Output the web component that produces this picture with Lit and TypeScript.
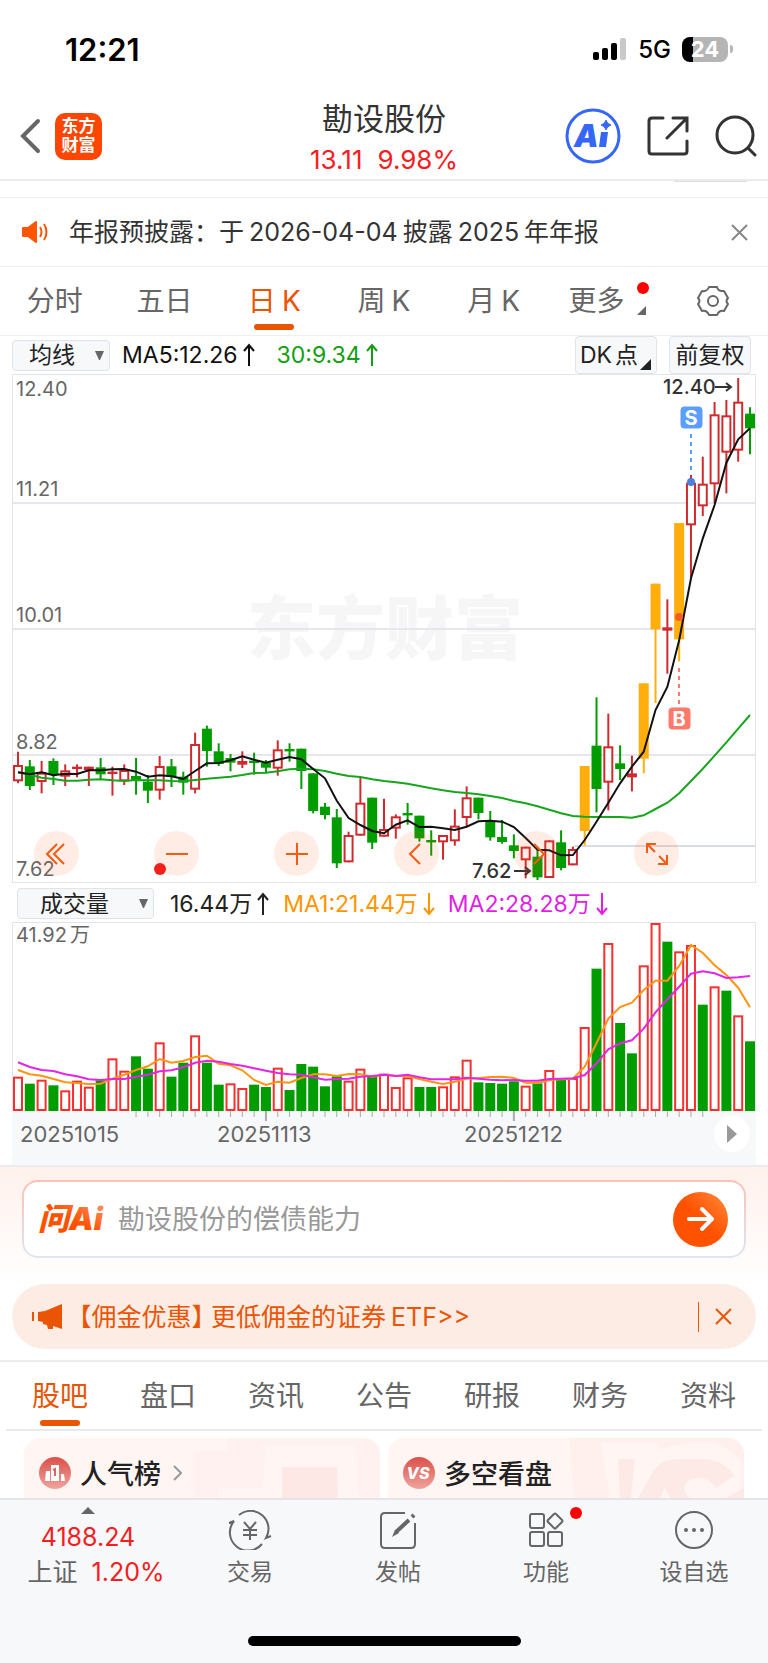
import { LitElement, html, svg, css } from "lit";
import { customElement, state } from "lit/decorators.js";
import { classMap } from "lit/directives/class-map.js";

type Tone = "r" | "g" | "o";
type Candle = [Tone, number, number, number, number];

/* Candles: tone, high, body top, body bottom, low (thirds of a pixel around the 8.82 band). */
const CANDLES: Candle[] = [
  ["r", 215, 255, 304, 310], ["g", 240, 259, 318, 330], ["r", 243, 278, 306, 340], ["g", 235, 243, 284, 315],
  ["r", 253, 271, 290, 318], ["r", 253, 260, 264, 292], ["r", 260, 260, 270, 318], ["g", 234, 262, 283, 300],
  ["r", 260, 275, 279, 347], ["r", 253, 270, 304, 315], ["g", 234, 288, 302, 344], ["g", 285, 305, 332, 369],
  ["r", 228, 258, 332, 359], ["g", 237, 259, 291, 321], ["g", 275, 290, 308, 344], ["r", 158, 192, 329, 340],
  ["g", 137, 146, 213, 260], ["g", 190, 214, 252, 258], ["g", 222, 234, 248, 274], ["r", 214, 243, 254, 264],
  ["g", 218, 242, 246, 284], ["g", 240, 248, 263, 280], ["r", 181, 208, 266, 287], ["g", 190, 207, 211, 245],
  ["g", 206, 206, 273, 327], ["g", 280, 280, 393, 400], ["g", 369, 380, 405, 418], ["g", 387, 412, 550, 564],
  ["r", 455, 465, 547, 547], ["r", 290, 368, 467, 467], ["g", 353, 353, 488, 507], ["r", 356, 447, 470, 470],
  ["r", 403, 409, 446, 476], ["g", 369, 399, 404, 434], ["g", 407, 407, 475, 485], ["g", 451, 480, 484, 527],
  ["r", 465, 465, 487, 539], ["r", 388, 437, 484, 497], ["r", 319, 352, 414, 440], ["g", 353, 353, 399, 418],
  ["g", 393, 423, 472, 482], ["g", 420, 471, 486, 491], ["g", 463, 496, 513, 535], ["r", 500, 500, 541, 595],
  ["g", 500, 530, 592, 600], ["r", 481, 481, 594, 594], ["g", 451, 487, 564, 571], ["r", 500, 507, 556, 556],
  ["o", 258, 258, 453, 496], ["g", 52, 197, 327, 397], ["r", 101, 199, 308, 391], ["g", 196, 250, 267, 300],
  ["r", 227, 280, 292, 334], ["o", 10, 10, 236, 280], ["o", -289, -289, -152, 69], ["r", -242, -158, -148, -19],
  ["o", -471, -471, -122, -56], ["r", -615, -592, -464, -305], ["r", -670, -589, -521, -492],
  ["r", -834, -797, -587, -530], ["r", -840, -794, -682, -560], ["r", -906, -835, -688, -655],
  ["g", -818, -799, -755, -677],
];

const MA5 = [277, 283, 277, 286, 281, 282, 271, 271, 268, 267, 275, 290, 286, 289, 297, 273, 250, 249, 241, 229, 239,
  248, 239, 231, 238, 267, 295, 362, 414, 435, 453, 460, 434, 421, 441, 440, 445, 450, 440, 424, 422, 425, 441, 474,
  509, 511, 526, 525, 480, 425, 368, 310, 260, 215, 90, 20, -120, -305, -425, -525, -652, -722, -755];

const MA30 = [277, 284, 293, 297, 302, 302, 299, 298, 301, 303, 300, 301, 301, 303, 304, 300, 296, 293, 290, 285, 279,
  278, 274, 268, 266, 268, 273, 281, 288, 291, 298, 303, 307, 311, 318, 325, 331, 336, 339, 343, 348, 354, 363, 370,
  379, 389, 400, 408, 410, 411, 411, 411, 413, 406, 387, 368, 340, 303, 266, 227, 187, 146, 105];

/* Volume bar tops, measured down from the top of the pane. */
const VOLUME: [Tone, number][] = [
  ["r", 590], ["g", 611], ["r", 599], ["g", 616], ["r", 631], ["r", 602], ["r", 620], ["g", 601], ["r", 535],
  ["r", 572], ["g", 529], ["g", 566], ["r", 487], ["g", 590], ["g", 548], ["r", 466], ["g", 548], ["g", 614],
  ["r", 610], ["r", 624], ["g", 614], ["g", 621], ["r", 563], ["g", 630], ["g", 552], ["g", 560], ["g", 619],
  ["g", 589], ["r", 602], ["r", 566], ["g", 590], ["r", 581], ["r", 621], ["r", 592], ["g", 621], ["g", 621],
  ["r", 619], ["r", 589], ["r", 539], ["g", 607], ["g", 609], ["g", 611], ["g", 604], ["r", 617], ["g", 610],
  ["r", 570], ["g", 600], ["r", 594], ["r", 441], ["g", 266], ["r", 189], ["g", 429], ["g", 520], ["r", 256],
  ["r", 129], ["g", 185], ["r", 214], ["r", 195], ["g", 374], ["r", 319], ["g", 332], ["r", 406], ["g", 484],
];

const VMA1 = [570, 583, 587, 597, 607, 609, 612, 611, 596, 584, 570, 559, 537, 548, 543, 531, 527, 551, 556, 571, 600,
  615, 605, 608, 594, 583, 583, 588, 582, 583, 590, 584, 587, 589, 597, 605, 612, 605, 596, 594, 591, 590, 594, 608,
  609, 601, 598, 596, 560, 490, 416, 381, 368, 330, 302, 302, 258, 195, 219, 256, 285, 323, 382];

const VMA2 = [547, 561, 570, 573, 583, 589, 598, 600, 597, 597, 590, 584, 574, 571, 562, 548, 542, 545, 552, 557, 565,
  572, 579, 583, 584, 592, 599, 597, 596, 590, 588, 584, 588, 584, 592, 598, 598, 598, 593, 596, 599, 601, 600, 602,
  602, 597, 596, 595, 585, 550, 508, 490, 481, 446, 397, 358, 320, 281, 274, 280, 294, 292, 288];

const cx = (i: number) => 6 + (i * 732) / 62;
const priceY = (v: number) => 306 + v / 3;
const volY = (v: number) => (v - 126) / 3;
const line = (values: number[], y: (v: number) => number) =>
  values.map((v, i) => `${cx(i).toFixed(1)},${y(v).toFixed(1)}`).join(" ");

const BASE = css`
  * {
    box-sizing: border-box;
  }
  button,
  select,
  input {
    font: inherit;
    color: inherit;
    margin: 0;
    padding: 0;
    border: 0;
    background: none;
    appearance: none;
  }
  button {
    cursor: pointer;
    display: flex;
    align-items: center;
    justify-content: center;
  }
  a {
    color: inherit;
    text-decoration: none;
  }
  svg {
    display: block;
  }
`;

@customElement("price-chart")
export class PriceChart extends LitElement {
  static styles = [
    BASE,
    css`
      :host {
        display: block;
        position: relative;
      }
      .plot {
        width: 100%;
        height: auto;
      }
      .frame {
        fill: none;
        stroke: #e3e4e8;
        stroke-width: 2;
      }
      .grid {
        stroke: #e6e7ee;
        stroke-width: 2;
      }
      .latest {
        stroke: #d9dce6;
        stroke-width: 2;
      }
      .watermark {
        font-size: 69px;
        font-weight: 900;
        fill: #f6f6f7;
        text-anchor: middle;
      }
      .label {
        font-size: 20px;
        fill: #666;
      }
      .peak {
        font-size: 20px;
        fill: #333;
        font-weight: 500;
      }
      .r {
        stroke: #cf2b2f;
        fill: #fff;
        stroke-width: 2;
      }
      .g {
        stroke: #009c00;
        fill: #009c00;
        stroke-width: 2;
      }
      .o {
        stroke: #ffae0c;
        fill: #ffae0c;
        stroke-width: 2;
      }
      .ma5 {
        fill: none;
        stroke: #111;
        stroke-width: 2;
      }
      .ma30 {
        fill: none;
        stroke: #17a51d;
        stroke-width: 2;
      }
      .arrow {
        fill: none;
        stroke: #333;
        stroke-width: 2;
      }
      .mark {
        fill: #fff;
        font-size: 20px;
        font-weight: 700;
        text-anchor: middle;
      }
      .sell {
        fill: #5b9ffb;
        stroke: #5b9ffb;
      }
      .buy {
        fill: #ff7a6b;
        stroke: #ff7a6b;
      }
      .dash {
        stroke-width: 2;
        stroke-dasharray: 4 4;
      }
      .tools {
        position: absolute;
        left: 0;
        right: 0;
        bottom: 7px;
        display: flex;
        gap: 75px;
        padding-left: 22px;
      }
      .tool {
        width: 45px;
        height: 45px;
        border-radius: 50%;
        background: rgba(255, 100, 30, 0.12);
      }
      .tool svg {
        fill: none;
        stroke: #f35b10;
        stroke-width: 2;
      }
      .dot {
        position: absolute;
        left: 142px;
        bottom: 8px;
        width: 12px;
        height: 12px;
        border-radius: 50%;
        background: #f2201d;
      }
    `,
  ];

  private candle([tone, high, top, bottom, low]: Candle, i: number) {
    const x = cx(i);
    const t = priceY(top);
    const b = priceY(bottom);
    return svg`<g class=${tone}>
      <line x1=${x} x2=${x} y1=${priceY(high)} y2=${priceY(low)}></line>
      <rect x=${x - 4} y=${t + 1} width="8" height=${Math.max(b - t - 2, 0.4)}></rect>
    </g>`;
  }

  private tool(label: string, d: string) {
    return html`<button class="tool" aria-label=${label}>
      <svg width="24" height="24" viewBox="0 0 24 24"><path d=${d}></path></svg>
    </button>`;
  }

  render() {
    return html`
      <svg class="plot" viewBox="0 0 744 509" role="img" aria-label="日K">
        <text class="watermark" x="373" y="280">东方财富</text>
        <line class="grid" x1="0" x2="744" y1="129" y2="129"></line>
        <line class="grid" x1="0" x2="744" y1="255" y2="255"></line>
        <line class="grid" x1="0" x2="744" y1="381" y2="381"></line>
        <line class="latest" x1="562" x2="744" y1="472" y2="472"></line>
        <rect class="frame" x="0" y="0" width="744" height="509"></rect>
        <text class="label" x="4" y="22">12.40</text>
        <text class="label" x="4" y="122">11.21</text>
        <text class="label" x="4" y="248">10.01</text>
        <text class="label" x="4" y="375">8.82</text>
        <text class="label" x="4" y="502">7.62</text>
        ${CANDLES.map((c, i) => this.candle(c, i))}
        <polyline class="ma30" points=${line(MA30, priceY)}></polyline>
        <polyline class="ma5" points=${line(MA5, priceY)}></polyline>
        <text class="peak" x="651" y="20">12.40</text>
        <path class="arrow" d="M703 13h16m-5 -4l5 4l-5 4"></path>
        <text class="peak" x="460" y="504">7.62</text>
        <path class="arrow" d="M502 497h16m-5 -4l5 4l-5 4"></path>
        <rect class="sell" x="669" y="33" width="21" height="21" rx="3"></rect>
        <text class="mark" x="679" y="51">S</text>
        <line class="sell dash" x1="679" x2="679" y1="60" y2="96"></line>
        <circle cx="679" cy="108" r="4" fill="#4a80e0"></circle>
        <rect class="buy" x="657" y="334" width="21" height="21" rx="3"></rect>
        <text class="mark" x="667" y="352">B</text>
        <line class="buy dash" x1="667" x2="667" y1="294" y2="330"></line>
        <circle cx="667" cy="243" r="4" fill="#ff5a26"></circle>
      </svg>
      <div class="tools">
        ${this.tool("最早", "M12 2L2 12L12 22M19 2L9 12L19 22")}
        ${this.tool("缩小", "M1 12H23")}
        ${this.tool("放大", "M1 12H23M12 1V23")}
        ${this.tool("向前", "M15 2L5 12L15 22")}
        ${this.tool("向后", "M9 2L19 12L9 22")}
        ${this.tool("全屏", "M2 11V2H11M2 2L10 10M13 22H22V13M22 22L14 14")}
      </div>
      <span class="dot"></span>
    `;
  }
}

@customElement("volume-chart")
export class VolumeChart extends LitElement {
  static styles = [
    BASE,
    css`
      :host {
        display: block;
      }
      .plot {
        width: 100%;
        height: auto;
      }
      .frame {
        fill: none;
        stroke: #e3e4e8;
        stroke-width: 2;
      }
      .label {
        font-size: 20px;
        fill: #666;
      }
      .r {
        fill: #fff;
        stroke: #f5302f;
        stroke-width: 2;
      }
      .g {
        fill: #009c00;
        stroke: #009c00;
        stroke-width: 2;
      }
      .ma1 {
        fill: none;
        stroke: #ff9410;
        stroke-width: 2;
      }
      .ma2 {
        fill: none;
        stroke: #e226e6;
        stroke-width: 2;
      }
      .axis {
        position: relative;
        background: #f7f8fa;
      }
      .ticks {
        width: 100%;
        height: auto;
        stroke: #aaa;
      }
      .dates {
        display: flex;
        padding: 2px 0 20px 8px;
        font-size: 22px;
        line-height: 22px;
        color: #666;
      }
      .date {
        width: 197px;
      }
      .date:nth-child(2) {
        width: 247px;
      }
      .next {
        position: absolute;
        right: 6px;
        top: 5px;
        width: 36px;
        height: 36px;
        border-radius: 50%;
        background: #fff;
      }
    `,
  ];

  render() {
    return html`
      <svg class="plot" viewBox="0 0 744 189" role="img" aria-label="成交量">
        <rect class="frame" x="0" y="0" width="744" height="200"></rect>
        <text class="label" x="4" y="20">41.92<tspan dx="3">万</tspan></text>
        ${VOLUME.map(
          ([tone, top], i) => svg`<rect class=${tone} x=${cx(i) - 4} y=${volY(top) + 1} width="8"
            height=${187 - volY(top)}></rect>`
        )}
        <polyline class="ma1" points=${line(VMA1, volY)}></polyline>
        <polyline class="ma2" points=${line(VMA2, volY)}></polyline>
      </svg>
      <div class="axis">
        <svg class="ticks" viewBox="0 0 744 10">
          ${VOLUME.map((_, i) =>
            i >= 10 && i <= 58
              ? svg`<line x1=${cx(i)} x2=${cx(i)} y1="0" y2=${i % 21 ? 6 : 10} stroke-width=${i % 21 ? 1 : 2}></line>`
              : null
          )}
        </svg>
        <div class="dates">
          <span class="date">20251015</span><span class="date">20251113</span><span class="date">20251212</span>
        </div>
        <button class="next" aria-label="播放">
          <svg width="12" height="18" viewBox="0 0 12 18"><path d="M1 0L11 9L1 18Z" fill="#999"></path></svg>
        </button>
      </div>
    `;
  }
}

@customElement("app-root")
export class AppRoot extends LitElement {
  @state() private period = 2;
  @state() private section = 0;

  static styles = [
    BASE,
    css`
      :host {
        display: block;
        min-height: 100vh;
        background: #fff;
        color: #333;
        font-family: Inter, "Noto Sans CJK SC", sans-serif;
        overflow-x: hidden;
      }
      .page {
        display: flex;
        flex-direction: column;
        min-height: 100vh;
      }
      .status {
        display: flex;
        align-items: center;
        justify-content: space-between;
        height: 98px;
        padding: 0 35px 0 65px;
        color: #000;
      }
      .clock {
        font-size: 31px;
        font-weight: 600;
      }
      .signals {
        display: flex;
        align-items: center;
        gap: 11px;
        font-size: 24px;
        font-weight: 500;
      }
      .battery {
        display: flex;
        align-items: center;
        gap: 2px;
      }
      .charge {
        width: 46px;
        height: 25px;
        border-radius: 8px;
        background: linear-gradient(90deg, #000 24%, #b5b5b5 24%);
        color: #fff;
        font-size: 22px;
        line-height: 25px;
        font-weight: 700;
        text-align: center;
      }
      .cap {
        width: 3px;
        height: 8px;
        border-radius: 0 4px 4px 0;
        background: #b5b5b5;
      }
      .nav {
        display: grid;
        grid-template-columns: 1fr auto 1fr;
        align-items: center;
        height: 83px;
        padding: 0 11px 7px;
        border-bottom: 2px solid #ebebeb;
      }
      .side {
        display: flex;
        align-items: center;
        gap: 14px;
        padding-left: 9px;
      }
      .side.end {
        justify-content: flex-end;
        gap: 26px;
        padding-left: 0;
      }
      .brand {
        width: 47px;
        height: 47px;
        border-radius: 10px;
        background: #ff4502;
        color: #fff;
        font-size: 17px;
        line-height: 19px;
        font-weight: 700;
        text-align: center;
        padding-top: 4px;
      }
      .brand span {
        display: block;
      }
      .quote {
        align-self: start;
        padding-top: 4px;
        text-align: center;
      }
      .name {
        margin: 0 0 10px;
        font-size: 31px;
        line-height: 34px;
        font-weight: 400;
      }
      .change {
        display: flex;
        justify-content: center;
        gap: 15px;
        font-size: 26px;
        line-height: 28px;
        color: #f32022;
      }
      .ai {
        width: 56px;
        height: 56px;
      }
      .ai text {
        font-size: 31px;
        font-weight: 900;
        font-style: italic;
        fill: #3566f6;
      }
      .strip {
        height: 17px;
        border-bottom: 1px solid #efefef;
        display: flex;
        justify-content: flex-end;
        padding-right: 21px;
      }
      .handle {
        width: 73px;
        height: 1px;
        background: #ddd;
      }
      .notice {
        display: flex;
        align-items: center;
        height: 69px;
        padding: 0 20px 0 22px;
        border-bottom: 1px solid #efefef;
        font-size: 25px;
        line-height: 32px;
      }
      .notice-text {
        flex: 1;
        display: flex;
        gap: 5px;
        margin-left: 21px;
      }
      .tabs {
        display: grid;
        grid-template-columns: repeat(7, 1fr);
        height: 69px;
        border-bottom: 1px solid #efefef;
        color: #666;
        font-size: 28px;
        line-height: 36px;
      }
      .tabs.section {
        border-bottom: 2px solid #e8e9ec;
        margin: 0 6px;
      }
      .tab {
        position: relative;
        gap: 6px;
      }
      .tab.on {
        color: #e95504;
      }
      .tab.on::after {
        content: "";
        position: absolute;
        left: 50%;
        bottom: 5px;
        width: 40px;
        height: 6px;
        margin-left: -20px;
        border-radius: 3px;
        background: #e95504;
      }
      .section .tab.on::after {
        bottom: 3px;
      }
      .tab.more {
        padding-right: 8px;
      }
      .badge {
        position: absolute;
        top: 15px;
        right: 9px;
        width: 12px;
        height: 12px;
        border-radius: 50%;
        background: #f00;
      }
      .corner {
        position: absolute;
        right: 12px;
        bottom: 20px;
      }
      .bar {
        display: flex;
        align-items: center;
        height: 38px;
        padding: 0 17px 0 12px;
        font-size: 23px;
        line-height: 30px;
      }
      .bar.volume {
        height: 39px;
        padding: 2px 17px 0;
        color: #222;
      }
      .pick {
        position: relative;
        display: flex;
        align-items: center;
      }
      .pick svg {
        position: absolute;
        right: 6px;
        pointer-events: none;
      }
      .select {
        height: 31px;
        width: 98px;
        padding-left: 16px;
        border: 1px solid #dfe3ea;
        border-radius: 4px;
        background: #f7f8fa;
        color: #222;
        line-height: 28px;
      }
      .volume .select {
        width: 137px;
        padding-left: 22px;
      }
      .ma {
        display: flex;
        align-items: center;
        gap: 5px;
        margin-left: 12px;
        color: #111;
      }
      .ma.up {
        margin-left: 22px;
        color: #12a012;
      }
      .volume .ma {
        margin-left: 16px;
        color: #222;
      }
      .volume .ma.one {
        margin-left: 14px;
        color: #ff9500;
      }
      .volume .ma.two {
        margin-left: 13px;
        color: #e21ee6;
      }
      .ma svg {
        fill: none;
        stroke: currentColor;
        stroke-width: 2;
      }
      .push {
        flex: 1;
      }
      .chip {
        position: relative;
        height: 38px;
        width: 82px;
        border: 1px solid #dfe3ea;
        border-radius: 4px;
        background: #f7f8fa;
        color: #222;
      }
      .chip + .chip {
        margin-left: 12px;
      }
      .chip.dk {
        justify-content: flex-start;
        gap: 3px;
        padding-left: 4px;
      }
      .chip svg {
        position: absolute;
        right: 5px;
        bottom: 3px;
      }
      .charts {
        padding: 0 12px;
      }
      .ask-zone {
        padding: 13px 22px 26px;
        border-top: 2px solid #ebecf0;
        background: linear-gradient(#fff1ec, #fff);
      }
      .ask {
        display: flex;
        align-items: center;
        height: 78px;
        padding: 0 16px 0 14px;
        border: 2px solid transparent;
        border-radius: 16px;
        background: linear-gradient(#fff, #fff) padding-box, linear-gradient(#ffc0b3, #dfe5f6) border-box;
      }
      .ask-logo {
        width: 68px;
        height: 36px;
      }
      .ask-logo text {
        font-size: 31px;
        font-weight: 900;
        font-style: italic;
      }
      .ask-input {
        flex: 1;
        min-width: 0;
        margin-left: 12px;
        font-size: 27px;
        line-height: 40px;
        height: 42px;
        outline: none;
      }
      .ask-input::placeholder {
        color: #999;
        opacity: 1;
      }
      .send {
        width: 55px;
        height: 55px;
        border-radius: 50%;
        background: linear-gradient(45deg, #ff5200 50%, #ff8b3d);
      }
      .promo {
        display: flex;
        align-items: center;
        height: 65px;
        margin: 0 12px 11px;
        padding: 0 24px 0 20px;
        border-radius: 33px;
        background: #fdece4;
        color: #e95504;
        font-size: 25px;
        line-height: 32px;
      }
      .promo-text {
        flex: 1;
        display: flex;
        gap: 5px;
        margin-left: 17px;
      }
      .half {
        font-feature-settings: "halt";
        margin-right: 2px;
      }
      .divider {
        width: 1px;
        height: 30px;
        margin-right: 16px;
        background: #e95504;
      }
      .rule {
        height: 2px;
        background: #ebecee;
      }
      .cards {
        display: grid;
        grid-template-columns: 1fr 1fr;
        gap: 8px;
        padding: 7px 24px 0;
      }
      .card {
        position: relative;
        overflow: hidden;
        display: flex;
        align-items: center;
        height: 60px;
        padding: 10px 15px 0;
        border-radius: 16px 16px 0 0;
        background: #fff6f4;
        color: #222;
        font-size: 27px;
        font-weight: 500;
      }
      .art {
        position: absolute;
        right: 0;
        top: 0;
      }
      .card > .ico,
      .card > .title,
      .card > .chev {
        position: relative;
      }
      .title {
        margin: 0 12px 0 9px;
        padding-bottom: 2px;
      }
      .ico text {
        font-size: 16px;
        font-weight: 800;
        font-style: italic;
        fill: #fff;
        text-anchor: middle;
      }
      .dock {
        flex: 1;
        display: flex;
        flex-direction: column;
        border-top: 2px solid #e4e5e8;
        background: #f7f8fa;
        color: #666;
      }
      .items {
        display: grid;
        grid-template-columns: 176fr 148fr 148fr 148fr 148fr;
        height: 120px;
        font-size: 23px;
        line-height: 30px;
      }
      .index {
        display: flex;
        flex-direction: column;
        align-items: center;
        padding-top: 7px;
        font-size: 25px;
      }
      .value {
        margin-top: 7px;
        line-height: 32px;
        color: #f32022;
      }
      .row {
        display: flex;
        gap: 14px;
        padding-left: 16px;
        line-height: 38px;
      }
      .pct {
        color: #f32022;
      }
      .item {
        position: relative;
        flex-direction: column;
        justify-content: flex-start;
        gap: 7px;
        padding-top: 10px;
      }
      .item svg {
        fill: none;
        stroke: #666;
        stroke-width: 2;
      }
      .item .ink {
        fill: #666;
        stroke: none;
      }
      .item .badge {
        top: 7px;
        right: 38px;
      }
      .home {
        width: 273px;
        height: 10px;
        margin: 16px auto;
        border-radius: 5px;
        background: #000;
      }
    `,
  ];

  private arrow(up: boolean) {
    return html`<svg width="12" height="24" viewBox="0 0 12 24">
      <path d=${up ? "M6 23V2M1 8L6 2L11 8" : "M6 1V22M1 16L6 22L11 16"}></path>
    </svg>`;
  }

  private close(color: string) {
    return html`<svg width="17" height="17" viewBox="0 0 17 17" fill="none" stroke=${color} stroke-width="2">
      <path d="M1 1L16 16M16 1L1 16"></path>
    </svg>`;
  }

  private caret() {
    return html`<svg width="9" height="9" viewBox="0 0 9 9"><path d="M0 0H9L5 9H4Z" fill="#666"></path></svg>`;
  }

  render() {
    return html`<div class="page">
      <div class="status">
        <span class="clock">12:21</span>
        <div class="signals">
          <svg width="34" height="24" viewBox="0 0 34 24">
            <rect x="0" y="15" width="6" height="8" rx="2"></rect>
            <rect x="9" y="11" width="6" height="12" rx="2"></rect>
            <rect x="18" y="6" width="6" height="17" rx="2"></rect>
            <rect x="27" y="1" width="6" height="22" rx="2" fill="#c9c9c9"></rect>
          </svg>
          <span>5G</span>
          <span class="battery"><span class="charge">24</span><span class="cap"></span></span>
        </div>
      </div>

      <header class="nav">
        <div class="side">
          <button aria-label="返回">
            <svg width="21" height="36" viewBox="0 0 21 36" fill="none" stroke="#666" stroke-width="4"
              stroke-linecap="round"><path d="M18 3L3 18L18 33"></path></svg>
          </button>
          <a class="brand" href="#"><span>东方</span><span>财富</span></a>
        </div>
        <div class="quote">
          <h1 class="name">勘设股份</h1>
          <div class="change"><span>13.11</span><span>9.98%</span></div>
        </div>
        <div class="side end">
          <button aria-label="Ai">
            <svg class="ai" viewBox="0 0 56 56">
              <circle cx="28" cy="28" r="26" fill="none" stroke="#3566f6" stroke-width="3"></circle>
              <text x="9" y="39">A</text>
              <path d="M36 24h7l-2 15h-7z" fill="#3566f6"></path>
              <path d="M41 12q1 4 5 5q-4 1 -5 5q-1 -4 -5 -5q4 -1 5 -5z" fill="#3566f6" stroke="#3566f6"></path>
            </svg>
          </button>
          <button aria-label="分享">
            <svg width="42" height="42" viewBox="0 0 42 42" fill="none" stroke="#333" stroke-width="3"
              stroke-linecap="round">
              <path d="M16 3H5Q2 3 2 6V36Q2 39 5 39H37Q40 39 40 36V26M26 3H40V16M40 3L20 23"></path>
            </svg>
          </button>
          <button aria-label="搜索">
            <svg width="42" height="42" viewBox="0 0 42 42" fill="none" stroke="#333" stroke-width="3"
              stroke-linecap="round">
              <circle cx="20" cy="20" r="18"></circle><path d="M33 33L40 40"></path>
            </svg>
          </button>
        </div>
      </header>
      <div class="strip"><span class="handle"></span></div>

      <div class="notice">
        <svg width="26" height="22" viewBox="0 0 26 22" fill="none" stroke="#ff5500" stroke-width="2">
          <path d="M1 7H6L14 1V21L6 15H1Z" fill="#ff5500" stroke-linejoin="round"></path>
          <path d="M18 6Q21 11 18 16M22 3Q27 11 22 19"></path>
        </svg>
        <span class="notice-text"><span>年报预披露：于</span><span>2026-04-04</span><span>披露</span><span>2025</span><span>年年报</span></span>
        <button aria-label="关闭">${this.close("#888")}</button>
      </div>

      <nav class="tabs">
        ${[["分时"], ["五日"], ["日", "K"], ["周", "K"], ["月", "K"]].map(
          (parts, i) => html`<button class="tab ${classMap({ on: i === this.period })}"
            @click=${() => (this.period = i)}>${parts.map((p) => html`<span>${p}</span>`)}</button>`
        )}
        <button class="tab more">更多<span class="badge"></span>
          <svg class="corner" width="9" height="9" viewBox="0 0 9 9"><path d="M9 0V9H0Z" fill="#666"></path></svg>
        </button>
        <button class="tab" aria-label="设置">
          <svg width="32" height="32" viewBox="0 0 32 32" fill="none" stroke="#666" stroke-width="2">
            <path d="M12 2H20Q21 6 25 6L27 6L31 13Q28 16 31 19L27 26Q22 25 20 30H12Q10 25 5 26L1 19Q4 16 1 13L5 6Q10 7 12 2Z"
              stroke-linejoin="round"></path>
            <circle cx="16" cy="16" r="5"></circle>
          </svg>
        </button>
      </nav>

      <div class="bar">
        <label class="pick">
          <select class="select" aria-label="主图指标"><option>均线</option></select>${this.caret()}
        </label>
        <span class="ma">MA5:12.26${this.arrow(true)}</span>
        <span class="ma up">30:9.34${this.arrow(true)}</span>
        <span class="push"></span>
        <button class="chip dk"><span>DK</span><span>点</span>
          <svg width="11" height="11" viewBox="0 0 11 11"><path d="M11 0V11H0Z" fill="#222"></path></svg>
        </button>
        <button class="chip">前复权</button>
      </div>
      <div class="charts"><price-chart></price-chart></div>
      <div class="bar volume">
        <label class="pick">
          <select class="select" aria-label="副图指标"><option>成交量</option></select>${this.caret()}
        </label>
        <span class="ma">16.44万${this.arrow(true)}</span>
        <span class="ma one">MA1:21.44万${this.arrow(false)}</span>
        <span class="ma two">MA2:28.28万${this.arrow(false)}</span>
      </div>
      <div class="charts"><volume-chart></volume-chart></div>

      <div class="ask-zone">
        <div class="ask">
          <svg class="ask-logo" viewBox="0 0 68 36" aria-hidden="true">
            <defs>
              <linearGradient id="fire" x1="0" y1="1" x2="1" y2="0">
                <stop offset="0.5" stop-color="#ff5200"></stop><stop offset="1" stop-color="#ff9a70"></stop>
              </linearGradient>
            </defs>
            <text x="0" y="29" fill="url(#fire)">问Ai</text>
          </svg>
          <input class="ask-input" type="text" aria-label="问Ai" placeholder="勘设股份的偿债能力" />
          <button class="send" aria-label="发送">
            <svg width="28" height="26" viewBox="0 0 28 26" fill="none" stroke="#fff" stroke-width="4"
              stroke-linecap="round" stroke-linejoin="round"><path d="M2 13H25M15 3L25 13L15 23"></path></svg>
          </button>
        </div>
      </div>

      <div class="promo">
        <svg width="30" height="26" viewBox="0 0 30 26" fill="#e95504">
          <rect x="0" y="8" width="2" height="9"></rect>
          <path d="M6 8L13 7L30 0V25L21 22V25H16L15 21L11 20V18L6 17Z"></path>
        </svg>
        <a class="promo-text" href="#"><span class="half">【佣金优惠】</span><span>更低佣金的证券</span><span>ETF&gt;&gt;</span></a>
        <span class="divider"></span>
        <button aria-label="关闭">${this.close("#e95504")}</button>
      </div>
      <div class="rule"></div>

      <nav class="tabs section">
        ${["股吧", "盘口", "资讯", "公告", "研报", "财务", "资料"].map(
          (t, i) => html`<button class="tab ${classMap({ on: i === this.section })}"
            @click=${() => (this.section = i)}>${t}</button>`
        )}
      </nav>

      <div class="cards">
        <a class="card" href="#">
          <svg class="art" width="190" height="60" viewBox="0 0 190 60" aria-hidden="true">
            <path d="M4 13H37V0H190V60H4Z" fill="#fff1ef"></path>
            <path d="M76 8H165L169 60H30V50H73Z" fill="#fff6f4"></path>
            <path d="M92 29H147L148 60H92Z" fill="#fde8e6"></path>
          </svg>
          <svg class="ico" width="32" height="32" viewBox="0 0 32 32">
            <defs>
              <linearGradient id="rank" x1="0" y1="0" x2="0" y2="1">
                <stop offset="0" stop-color="#dc4f49"></stop><stop offset="1" stop-color="#f0a39e"></stop>
              </linearGradient>
            </defs>
            <circle cx="16" cy="16" r="16" fill="url(#rank)"></circle>
            <path d="M7 14H11V24H6ZM12 8H20V24H12ZM22 17H25L26 24H22Z" fill="#fff"></path>
            <path d="M14 13L16 12V19" fill="none" stroke="#dd6660" stroke-width="2"></path>
          </svg>
          <span class="title">人气榜</span>
          <svg class="chev" width="9" height="16" viewBox="0 0 9 16" fill="none" stroke="#999" stroke-width="2">
            <path d="M1 1L8 8L1 15"></path>
          </svg>
        </a>
        <a class="card" href="#">
          <svg class="art" width="176" height="60" viewBox="0 0 176 60" aria-hidden="true">
            <path d="M1 0H176V60H6Z" fill="#fff0ed"></path>
            <path d="M33 5H88L92 12Q110 4 140 5Q162 8 174 26L172 60H42Z" fill="#fff6f4"></path>
            <path d="M50 21H67L63 60H52Z" fill="#fdeae7"></path>
            <path d="M70 60L86 32Q94 21 112 21H140Q158 24 166 38L148 50Q140 38 128 40Q112 44 118 56L122 60H102L97 50L92 60Z"
              fill="#fdeae7"></path>
            <path d="M158 60L176 50V60Z" fill="#fdeae7"></path>
          </svg>
          <svg class="ico" width="32" height="32" viewBox="0 0 32 32" aria-hidden="true">
            <defs>
              <linearGradient id="versus" x1="0" y1="0" x2="0" y2="1">
                <stop offset="0" stop-color="#dc4f49"></stop><stop offset="1" stop-color="#f0a39e"></stop>
              </linearGradient>
            </defs>
            <circle cx="16" cy="16" r="16" fill="url(#versus)"></circle>
            <text x="15" y="22">VS</text>
          </svg>
          <span class="title">多空看盘</span>
        </a>
      </div>

      <footer class="dock">
        <div class="items">
          <a class="index" href="#">
            <svg width="14" height="7" viewBox="0 0 14 7"><path d="M7 0L14 7H0Z" fill="#666"></path></svg>
            <span class="value">4188.24</span>
            <span class="row"><span>上证</span><span class="pct">1.20%</span></span>
          </a>
          <button class="item">
            <svg width="44" height="40" viewBox="0 0 44 40">
              <path d="M11 5A18 18 0 0 1 38 28L43 26M34 34A18 18 0 0 1 6 11L1 13"></path>
              <path d="M16 12L22 19L28 12M15 20H29M15 25H29M22 19V30"></path>
            </svg>交易
          </button>
          <button class="item">
            <svg width="40" height="40" viewBox="0 0 40 40">
              <path d="M27 3H7Q3 3 3 7V34Q3 38 7 38H33Q37 38 37 34V13"></path>
              <path d="M18 22L31 10M34 7L36 5" stroke-width="4"></path>
              <path class="ink" d="M14 27L17 20L21 23Z"></path>
            </svg>发帖
          </button>
          <button class="item">
            <svg width="40" height="40" viewBox="0 0 40 40">
              <rect x="4" y="4" width="14" height="14" rx="2"></rect>
              <rect x="4" y="22" width="14" height="14" rx="2"></rect>
              <rect x="22" y="22" width="14" height="14" rx="2"></rect>
              <path d="M28 4Q29 3 30 4L36 10Q37 11 36 12L30 18Q29 19 28 18L22 12Q21 11 22 10Z"></path>
            </svg>功能<span class="badge"></span>
          </button>
          <button class="item">
            <svg width="40" height="40" viewBox="0 0 40 40">
              <circle cx="20" cy="20" r="18"></circle>
              <circle class="ink" cx="12" cy="20" r="2"></circle>
              <circle class="ink" cx="20" cy="20" r="2"></circle>
              <circle class="ink" cx="28" cy="20" r="2"></circle>
            </svg>设自选
          </button>
        </div>
        <div class="home"></div>
      </footer>
    </div>`;
  }
}
